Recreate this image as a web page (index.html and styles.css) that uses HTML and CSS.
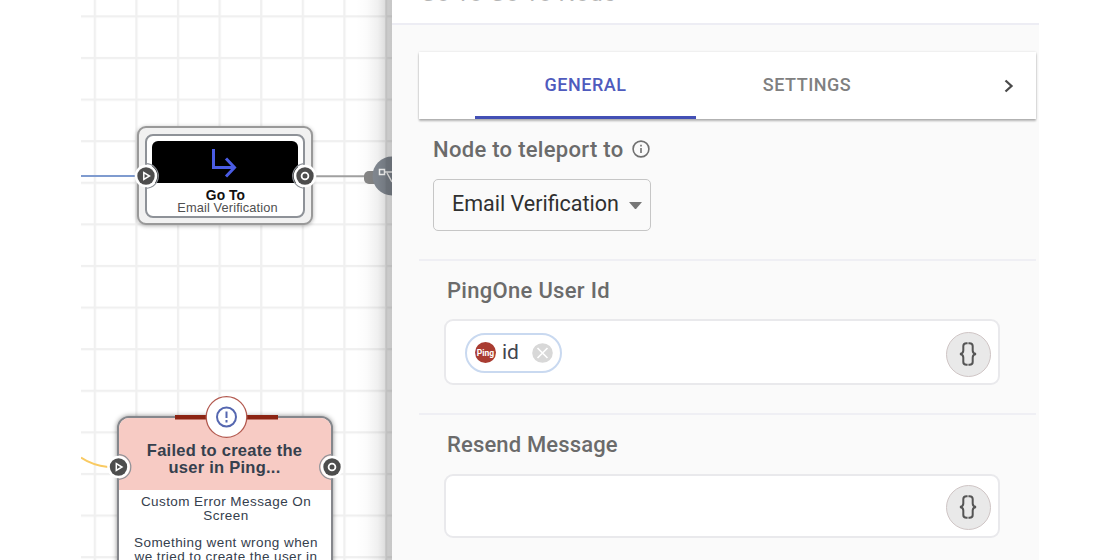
FILE: index.html
```html
<!DOCTYPE html>
<html lang="en">
<head>
<meta charset="utf-8">
<title>Flow editor</title>
<link rel="stylesheet" href="styles.css">
</head>
<body>
<div class="app">
  <section class="canvas">
    <svg class="wires" width="311" height="560" viewBox="81 0 311 560" fill="none">
      <defs>
        <pattern id="grid" x="93.700" y="15.300" width="41.6" height="41.6" patternUnits="userSpaceOnUse">
          <path d="M1.200 0V41.6M0 1.200H41.6" stroke="#f0f0f0" stroke-width="2.300"/>
        </pattern>
      </defs>
      <rect x="81" width="311" height="560" fill="url(#grid)"/>
      <path d="M81 176H138" stroke="#7f9bcf" stroke-width="2"/>
      <path d="M314 176.300H368" stroke="#a0a0a0" stroke-width="2"/>
      <rect x="364" y="171" width="16" height="13" rx="5" fill="#868686"/>
      <circle cx="392" cy="176" r="19.500" fill="#858c95"/>
      <path d="M379.500 169.500h5v5h-5zM385 172h7M387 173l5 9" stroke="#fff" stroke-width="1.500"/>
      <path d="M81 457.500C89 463 96 465.500 108 467" stroke="#f9ca62" stroke-width="2"/>
    </svg>

    <article class="node goto">
      <div class="goto-card">
        <div class="goto-icon">
          <svg width="28" height="32" viewBox="0 0 28 32" fill="none" stroke="#4a5ce4" stroke-width="3"><path d="M4.500 3V21.500H26M17 12.500l8.500 9L17 30.500"/></svg>
        </div>
        <strong class="goto-name">Go To</strong>
        <span class="goto-sub">Email Verification</span>
      </div>
    </article>

    <article class="node error">
      <header class="error-head">Failed to create the<br>user in Ping...</header>
      <p class="error-text">Custom Error Message On<br>Screen</p>
      <p class="error-text">Something went wrong when<br>we tried to create the user in</p>
    </article>

    <svg class="ports" width="311" height="560" viewBox="81 0 311 560" fill="none">
      <path d="M175 417.300H278" stroke="#8c2413" stroke-width="4.500"/>
      <circle cx="226.500" cy="417" r="20.300" fill="#fff" stroke="#b35a50" stroke-width="1.300"/>
      <circle cx="226.500" cy="417" r="9.500" stroke="#5567b0" stroke-width="2"/>
      <path d="M226.500 411.500v6.500M226.500 420v2.500" stroke="#5567b0" stroke-width="2"/>
      <g id="in-port">
        <path d="M146 163.700a12.300 12.300 0 0 1 0 24.600" stroke="#8e9298" stroke-width="1.200"/>
        <circle cx="146" cy="176" r="11.300" fill="#fff"/>
        <circle cx="146" cy="176" r="8.700" fill="#4d4d4d"/>
        <path d="M143.800 172.500v7l5.700-3.500z" stroke="#fff" stroke-width="1.500"/>
      </g>
      <g id="out-port">
        <path d="M305 163.700a12.300 12.300 0 0 0 0 24.600" stroke="#8e9298" stroke-width="1.200"/>
        <circle cx="305" cy="176" r="11.300" fill="#fff"/>
        <circle cx="305" cy="176" r="8.700" fill="#4d4d4d"/>
        <circle cx="305" cy="176" r="3.400" stroke="#fff" stroke-width="1.800"/>
      </g>
      <use href="#in-port" x="-27.500" y="291"/>
      <use href="#out-port" x="27" y="291"/>
    </svg>
  </section>

  <aside class="panel">
    <header class="panel-head"><span class="panel-title">Go To Go To Node</span></header>
    <nav class="tabs">
      <span class="tab active">GENERAL</span>
      <span class="tab">SETTINGS</span>
      <svg class="next" width="10" height="14" viewBox="0 0 10 14" fill="none" stroke="#4a4a4a" stroke-width="2.300"><path d="M1.500 1.500L7.500 7l-6 5.500"/></svg>
    </nav>
    <section class="field teleport">
      <div class="label">Node to teleport to
        <svg width="18" height="18" viewBox="0 0 18 18" fill="none" stroke="#707070" stroke-width="1.600"><circle cx="9" cy="9" r="7.900"/><path d="M9 8v5M9 4.800v1.800"/></svg>
      </div>
      <div class="select">Email Verification<i class="caret"></i></div>
    </section>
    <section class="field user">
      <div class="label">PingOne User Id</div>
      <div class="input">
        <span class="chip"><b class="logo">Ping</b><span class="chip-text">id</span>
          <svg width="21" height="20" viewBox="0 0 21 20"><ellipse cx="10.500" cy="10" rx="10.300" ry="9.800" fill="#d8d8d8"/><path d="M5.500 5l10 10M15.500 5l-10 10" stroke="#fff" stroke-width="1.600"/></svg>
        </span>
        <span class="braces"><svg width="18" height="24" viewBox="0 0 18 24" fill="none" stroke="#555" stroke-width="2"><path d="M8.600 1.200H7.500Q4.300 1.200 4.300 4V8.500Q4.300 11.500 1 12 4.300 12.500 4.300 15.500V20Q4.300 22.800 7.500 22.800H8.600M9.400 1.200h1.100q3.200 0 3.200 2.800v4.500q0 3 3.300 3.500-3.300.5-3.300 3.500V20q0 2.800-3.200 2.800H9.400"/></svg></span>
      </div>
    </section>
    <section class="field message">
      <div class="label">Resend Message</div>
      <div class="input">
        <span class="braces"><svg width="18" height="24" viewBox="0 0 18 24" fill="none" stroke="#555" stroke-width="2"><path d="M8.600 1.200H7.500Q4.300 1.200 4.300 4V8.500Q4.300 11.500 1 12 4.300 12.500 4.300 15.500V20Q4.300 22.800 7.500 22.800H8.600M9.400 1.200h1.100q3.200 0 3.200 2.800v4.500q0 3 3.300 3.500-3.300.5-3.300 3.500V20q0 2.800-3.200 2.800H9.400"/></svg></span>
      </div>
    </section>
  </aside>
</div>
</body>
</html>
```

FILE: styles.css
```css
* { box-sizing: border-box; }
body { margin: 0; background: #fff; overflow: hidden; font-family: Roboto, sans-serif; }
.app { display: flex; width: 1120px; height: 560px; padding-left: 81px; overflow: hidden; }

.canvas { position: relative; width: 311px; height: 560px; overflow: hidden; font-family: "Liberation Sans", Arial, sans-serif; }
.canvas::after { content: ""; position: absolute; top: 0; right: 0; width: 36px; height: 560px; background: linear-gradient(to right, transparent 0, rgba(0,0,0,.015) 30%, rgba(0,0,0,.06) 60%, rgba(0,0,0,.13) 80%, rgba(0,0,0,.2) 84%, rgba(0,0,0,.22) 100%); }
.wires, .ports { position: absolute; top: 0; left: 0; }
.node { position: absolute; text-align: center; }

.goto { left: 56px; top: 126px; width: 176px; height: 99px; padding: 6px; border: 2px solid #999; border-radius: 9px; background: #f1f1f1; box-shadow: 0 1px 4px rgba(0,0,0,.3); }
.goto-card { display: flex; flex-direction: column; height: 84px; padding: 5px 5px 0; border: 2px solid #8e9298; border-radius: 8px; background: #fff; }
.goto-icon { display: flex; justify-content: center; align-items: center; height: 42px; background: #000; border-radius: 6px 6px 0 0; padding-right: 5px; }
.goto-name { font-size: 13.800px; line-height: 14px; margin-top: 6px; padding-left: 1px; color: #111; letter-spacing: .1px; }
.goto-sub { margin-top: -2px; font-size: 12.8px; line-height: 13px; color: #505050; padding-left: 5px; white-space: nowrap; letter-spacing: .12px; }

.error { left: 36px; top: 416px; width: 216px; height: 170px; border: 2px solid #85878c; border-radius: 12px; background: #fff; overflow: hidden; box-shadow: 0 0 5px rgba(0,0,0,.45); color: #35404d; }
.error-head { height: 72px; padding: 24px 1px 0 0; background: #f7cbc4; font-size: 16.500px; line-height: 17px; font-weight: 700; letter-spacing: .25px; }
.error-text { margin: 5px 0 13px; padding-left: 2px; font-size: 13.5px; line-height: 14px; letter-spacing: .42px; white-space: nowrap; }

.panel { width: 647px; height: 560px; background: #fafafa; color: #6b6b6b; }
.panel-head { height: 25px; background: #fff; border-bottom: 2px solid #ededf4; padding-left: 28px; overflow: hidden; }
.panel-title { display: block; margin-top: -20px; font-size: 23.500px; line-height: 26px; letter-spacing: .4px; color: #b5b5b5; white-space: nowrap; }
.tabs { display: flex; align-items: center; width: 617px; height: 67px; margin: 27px 0 0 27px; padding-left: 56px; background: #fff; box-shadow: 0 2px 2px rgba(0,0,0,.28), 0 0 2px rgba(0,0,0,.12); }
.tab { display: flex; justify-content: center; align-items: center; width: 221px; height: 67px; padding: 1px 0 0 1px; border-bottom: 3px solid transparent; font-size: 18px; font-weight: 500; letter-spacing: .5px; color: #808080; }
.tab.active { padding-left: 0; color: #4f5bbd; border-color: #4350b5; }
.next { margin-left: 87px; }

.field { width: 617px; margin-left: 27px; }
.label { display: flex; align-items: center; gap: 9px; height: 26px; font-size: 22px; font-weight: 500; letter-spacing: .3px; white-space: nowrap; }
.teleport { height: 140px; padding: 17px 0 0 14px; }
.select { display: flex; align-items: center; justify-content: space-between; width: 218px; height: 52px; margin-top: 17px; padding: 0 8px 3px 18px; border: 1.500px solid #c6c6c6; border-radius: 5px; font-size: 21.500px; color: #303030; white-space: nowrap; }
.caret { width: 13px; border: 6.500px solid transparent; border-top: 7px solid #777; border-bottom: 0; margin-top: 3px; }
.user, .message { border-top: 2px solid #efeff4; padding: 16px 0 0 25px; }
.user { height: 154px; }
.user .label, .message .label { padding-left: 3px; }
.message .label { letter-spacing: .15px; }
.input { display: flex; align-items: center; width: 556px; height: 66px; margin-top: 16px; padding: 4px 8px 0 20px; border: 2px solid #e9e9ec; border-radius: 9px; background: #fff; }
.message .input { height: 64px; margin-top: 17px; padding-top: 2px; }
.chip { display: flex; align-items: center; width: 97px; height: 40px; margin: -3px 0 0 -1px; padding: 0 7px 0 8px; border: 2px solid #c9d9f0; border-radius: 20px; }
.logo { display: flex; align-items: center; justify-content: center; width: 21px; height: 21px; border-radius: 50%; background: #a93c31; color: #fff; font-size: 8.500px; }
.chip-text { margin: -2px auto 0 6px; font-size: 21px; color: #41454f; }
.braces { display: flex; align-items: center; justify-content: center; width: 45px; height: 45px; margin-left: auto; margin-right: -1px; padding-right: 1px; border: 1px solid #cfc5c5; border-radius: 50%; background: #e9e9e9; }
```
